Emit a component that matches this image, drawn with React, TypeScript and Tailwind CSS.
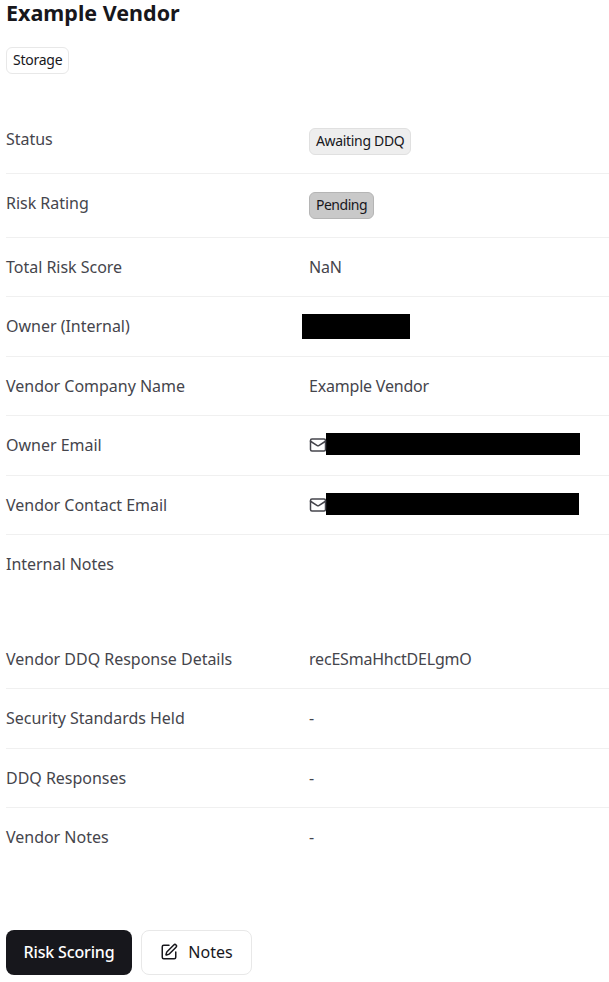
import { Mail, SquarePen } from "lucide-react";
import type { ReactNode } from "react";

function Row({ label, children, cls = "h-[59.45px]", top = "pt-[17.1px]", last = false }: { label: string; children?: ReactNode; cls?: string; top?: string; last?: boolean }) {
  return (
    <div className={`grid grid-cols-[303px_1fr] ${cls} ${top} ${last ? "" : "border-b border-[#f0f0f0]"}`}>
      <div className="text-[#45454c] text-base leading-6 tracking-[-0.02px]">{label}</div>
      <div className="text-[#45454c] text-base leading-6 tracking-[-0.2px] min-w-0">{children}</div>
    </div>
  );
}

function Redacted({ w }: { w: string }) {
  return <div className={`bg-black h-[22px] ${w}`} />;
}

function EmailCell({ w }: { w: string }) {
  return (
    <div className="flex items-center h-6 -mt-px">
      <Mail size={18} strokeWidth={2} className="text-[#45454c] shrink-0 -mr-px translate-y-px" />
      <Redacted w={w} />
    </div>
  );
}

export default function App() {
  return (
    <div className="w-[609px] h-[982px] bg-white overflow-hidden pl-1.5 font-['Noto_Sans',sans-serif]">
      <h1 className="text-[21.5px] leading-[26px] font-bold text-[#17171c] font-['Noto_Sans',sans-serif]">Example Vendor</h1>
      <div className="mt-[21px] flex">
        <span className="border border-[#e8e8e8] rounded-md h-[27px] px-1.5 text-sm leading-[24px] tracking-[-0.25px] text-[#17171c] bg-white">Storage</span>
      </div>
      <div className="mt-[33px]">
        <Row label="Status" cls="h-[67px]" top="pt-[20px]">
          <span className="inline-block mt-[1px] border border-[#e0e0e0] bg-[#eeeeee] rounded-md h-[27px] px-1.5 text-sm leading-[24px] tracking-[-0.33px] text-[#17171c]">Awaiting DDQ</span>
        </Row>
        <Row label="Risk Rating" cls="h-[63.9px]" top="pt-[17px]">
          <span className="inline-block mt-[1px] border border-[#b5b5b5] bg-[#c9c9c9] rounded-md h-[27px] px-1.5 text-sm leading-[24px] tracking-[-0.5px] text-[#17171c]">Pending</span>
        </Row>
        <Row label="Total Risk Score">NaN</Row>
        <Row label="Owner (Internal)"><div className="-ml-[7px] w-[108px]"><Redacted w="w-[108px] h-[25px]" /></div></Row>
        <Row label="Vendor Company Name">Example Vendor</Row>
        <Row label="Owner Email"><EmailCell w="w-[254px]" /></Row>
        <Row label="Vendor Contact Email"><EmailCell w="w-[253px]" /></Row>
        <Row label="Internal Notes" cls="h-[94.5px]" last />
        <Row label="Vendor DDQ Response Details">recESmaHhctDELgmO</Row>
        <Row label="Security Standards Held" cls="h-[59.9px]">-</Row>
        <Row label="DDQ Responses">-</Row>
        <Row label="Vendor Notes" last>-</Row>
      </div>
      <div className="flex gap-[9px] mt-[62.5px]">
        <button className="h-[45px] w-[126px] pb-px rounded-lg bg-[#17171c] text-white text-base font-medium tracking-[-0.15px]">Risk Scoring</button>
        <button className="h-[45px] w-[111px] pb-px rounded-lg border border-[#e8e8e8] bg-white text-[#17171c] text-base font-normal flex items-center justify-center gap-2.5">
          <SquarePen size={18} />
          Notes
        </button>
      </div>
    </div>
  );
}
